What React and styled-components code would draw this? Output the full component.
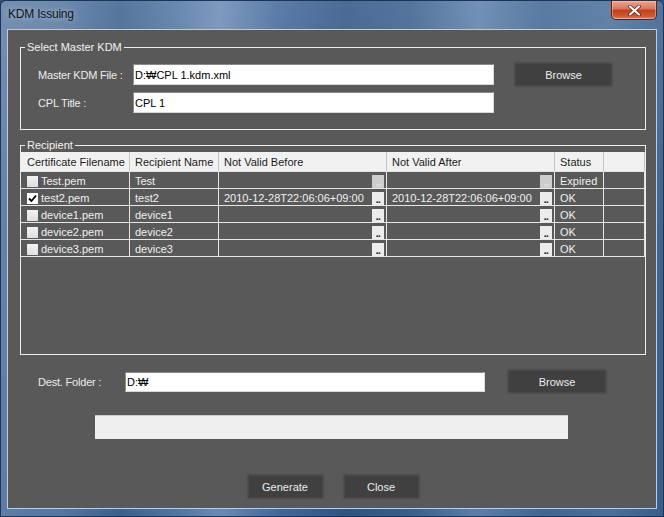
import React from "react";
import styled, { createGlobalStyle } from "styled-components";

const GlobalStyle = createGlobalStyle`
  html, body {
    margin: 0;
    padding: 0;
    background: #2f4f7a;
  }
  body {
    font-family: "Liberation Sans", Arial, sans-serif;
    font-size: 11px;
  }
`;

const recipients = [
  { file: "Test.pem", name: "Test", before: "", after: "", status: "Expired", checked: false, dim: true },
  { file: "test2.pem", name: "test2", before: "2010-12-28T22:06:06+09:00", after: "2010-12-28T22:06:06+09:00", status: "OK", checked: true },
  { file: "device1.pem", name: "device1", before: "", after: "", status: "OK", checked: false },
  { file: "device2.pem", name: "device2", before: "", after: "", status: "OK", checked: false },
  { file: "device3.pem", name: "device3", before: "", after: "", status: "OK", checked: false },
];

const App = () => {
  return (
    <>
      <GlobalStyle />
      <Window>
        <TitleBar>
          <Title>KDM Issuing</Title>
          <CloseButton>
            <svg width="13" height="11" viewBox="0 0 13 11">
              <path d="M2 1.5 L11 9.5 M11 1.5 L2 9.5" stroke="#5a1a10" strokeWidth="3.6" strokeLinecap="round" />
              <path d="M2 1.5 L11 9.5 M11 1.5 L2 9.5" stroke="#ffffff" strokeWidth="2.2" strokeLinecap="round" />
            </svg>
          </CloseButton>
        </TitleBar>
        <Client>
          <Group>
            <Legend>Select Master KDM</Legend>
            <GroupBody>
              <FormRow>
                <Label $width={95}>Master KDM File :</Label>
                <TextBox $width={361} $height={21} readOnly value="D:₩CPL 1.kdm.xml" />
                <Button $width={97} $ml={21}>Browse</Button>
              </FormRow>
              <FormRow>
                <Label $width={95}>CPL Title :</Label>
                <TextBox $width={361} $height={21} readOnly value="CPL 1" />
              </FormRow>
            </GroupBody>
          </Group>

          <Group $mt={8}>
            <Legend>Recipient</Legend>
            <TableArea>
              <Row $header>
                <Cell $first>Certificate Filename</Cell>
                <Cell>Recipient Name</Cell>
                <Cell>Not Valid Before</Cell>
                <Cell>Not Valid After</Cell>
                <Cell>Status</Cell>
                <Cell />
              </Row>
              {recipients.map((r) => (
                <Row key={r.file}>
                  <Cell $first>
                    <CheckBox $checked={r.checked}>
                      {r.checked && (
                        <svg width="9" height="9" viewBox="0 0 9 9">
                          <path d="M1 4.5 L3.5 7 L8 1.5" stroke="#000" strokeWidth="1.8" fill="none" />
                        </svg>
                      )}
                    </CheckBox>
                    {r.file}
                  </Cell>
                  <Cell>{r.name}</Cell>
                  <Cell $tight>
                    {r.before}
                    <Ellipsis $dim={r.dim}>..</Ellipsis>
                  </Cell>
                  <Cell $tight>
                    {r.after}
                    <Ellipsis $dim={r.dim}>..</Ellipsis>
                  </Cell>
                  <Cell>{r.status}</Cell>
                  <Cell />
                </Row>
              ))}
            </TableArea>
          </Group>

          <DestRow>
            <Label $width={87}>Dest. Folder :</Label>
            <TextBox $width={360} $height={20} readOnly value="D:₩" />
            <Button $width={98} $ml={23}>Browse</Button>
          </DestRow>

          <Progress />

          <Actions>
            <Button $width={75}>Generate</Button>
            <Button $width={75}>Close</Button>
          </Actions>
        </Client>
      </Window>
    </>
  );
};

const Window = styled.div`
  width: 664px;
  height: 517px;
  box-sizing: border-box;
  display: flex;
  flex-direction: column;
  border: 1px solid #1c3557;
  border-radius: 6px 6px 0 0;
  background:
    linear-gradient(180deg, rgba(255, 255, 255, 0.14) 0%, rgba(255, 255, 255, 0.04) 45%, rgba(0, 0, 0, 0) 100%),
    linear-gradient(
      90deg,
      #5d7da5 0%,
      #56779f 9%,
      #3b608e 18%,
      #5277a3 27%,
      #6a8bb3 33%,
      #41669a 42%,
      #2f5484 52%,
      #3a5f8e 62%,
      #5c7faa 72%,
      #3f6593 82%,
      #4a6f9b 92%,
      #385d8b 100%
    );
  overflow: hidden;
`;

const TitleBar = styled.div`
  height: 28px;
  display: flex;
  align-items: flex-start;
  flex-shrink: 0;
`;

const Title = styled.div`
  padding-left: 7px;
  line-height: 26px;
  font-size: 12px;
  letter-spacing: -0.2px;
  color: #101418;
  text-shadow: 0 0 6px rgba(255, 255, 255, 0.6);
`;

const CloseButton = styled.div`
  margin-left: auto;
  margin-right: 6px;
  width: 46px;
  height: 19px;
  box-sizing: border-box;
  display: flex;
  align-items: center;
  justify-content: center;
  border: 1px solid #5e2418;
  border-top: none;
  border-radius: 0 0 5px 5px;
  background: linear-gradient(180deg, #e9a792 0%, #d9785f 42%, #c2401f 52%, #cf5a33 85%, #e28a62 100%);
  box-shadow: inset 0 0 0 1px rgba(255, 210, 190, 0.45);
`;

const Client = styled.div`
  flex: 1;
  margin: 0 6px 7px;
  border: 1px solid #bccde2;
  background: #595959;
  padding: 10px 10px 0 12px;
  display: flex;
  flex-direction: column;
`;

const Group = styled.fieldset`
  margin: ${(p) => p.$mt || 0}px 0 0;
  padding: 0;
  min-width: 0;
  border: 1px solid #ececec;
`;

const Legend = styled.legend`
  margin-left: 4px;
  padding: 0 2px;
  line-height: 14px;
  font-size: 11px;
  color: #f2f2f2;
`;

const GroupBody = styled.div`
  padding: 9px 0 16px 17px;
  display: flex;
  flex-direction: column;
  gap: 6px;
`;

const FormRow = styled.div`
  display: flex;
  align-items: center;
`;

const Label = styled.div`
  width: ${(p) => p.$width}px;
  flex-shrink: 0;
  color: #ececec;
  font-size: 11px;
  letter-spacing: -0.2px;
`;

const TextBox = styled.input`
  width: ${(p) => p.$width}px;
  height: ${(p) => p.$height}px;
  box-sizing: border-box;
  margin: 0;
  padding: 0 1px;
  border: 1px solid;
  border-color: #8a8a8a #d8d8d8 #d8d8d8 #8a8a8a;
  background: #ffffff;
  color: #000;
  font-family: "Liberation Sans", Arial, sans-serif;
  font-size: 11px;
  outline: none;
`;

const Button = styled.button`
  width: ${(p) => p.$width}px;
  height: 23px;
  margin: 0 0 0 ${(p) => p.$ml || 0}px;
  padding: 0;
  box-sizing: border-box;
  background: #404040;
  border: 1px solid #484848;
  box-shadow: 0 0 2px rgba(0, 0, 0, 0.35);
  color: #ececec;
  font-family: "Liberation Sans", Arial, sans-serif;
  font-size: 11px;
`;

const TableArea = styled.div`
  height: 202px;
  background: #595959;
`;

const Row = styled.div`
  display: grid;
  grid-template-columns: 109px 89px 168px 168px 49px 1fr;
  height: ${(p) => (p.$header ? 20 : 17)}px;
  box-sizing: border-box;
  background: ${(p) => (p.$header ? "#f1f1f1" : "transparent")};
  color: ${(p) => (p.$header ? "#1c1c1c" : "#f0f0f0")};
  border-bottom: 1px solid ${(p) => (p.$header ? "#e2e2e2" : "#e6e6e6")};
  & > div {
    border-right: 1px solid ${(p) => (p.$header ? "#c6c6c6" : "#e6e6e6")};
    padding-top: ${(p) => (p.$header ? 1 : 2)}px;
  }
`;

const Cell = styled.div`
  display: flex;
  align-items: center;
  padding-right: ${(p) => (p.$tight ? 2 : 5)}px;
  padding-left: ${(p) => (p.$first ? 6 : 5)}px;
  box-sizing: border-box;
  white-space: nowrap;
  overflow: hidden;
  font-size: 11px;
`;

const CheckBox = styled.span`
  width: 11px;
  height: 11px;
  margin-right: 3px;
  flex-shrink: 0;
  display: flex;
  align-items: center;
  justify-content: center;
  background: ${(p) => (p.$checked ? "#ffffff" : "linear-gradient(180deg, #f2f2f2, #dedede)")};
`;

const Ellipsis = styled.span`
  margin-left: auto;
  width: 12px;
  height: 13px;
  flex-shrink: 0;
  display: flex;
  align-items: flex-end;
  justify-content: center;
  background: ${(p) => (p.$dim ? "#cdcdcd" : "#ececec")};
  color: ${(p) => (p.$dim ? "#e8e8e8" : "#111")};
  font-size: 10px;
  font-weight: bold;
  line-height: 11px;
  letter-spacing: -0.5px;
`;

const DestRow = styled.div`
  margin-top: 15px;
  padding-left: 18px;
  display: flex;
  align-items: center;
`;

const Progress = styled.div`
  margin: 22px 0 0 75px;
  width: 473px;
  height: 24px;
  box-sizing: border-box;
  background: #efefef;
  border-top: 1px solid #cfcfcf;
`;

const Actions = styled.div`
  margin-top: 36px;
  display: flex;
  justify-content: center;
  gap: 21px;
`;

export default App;
